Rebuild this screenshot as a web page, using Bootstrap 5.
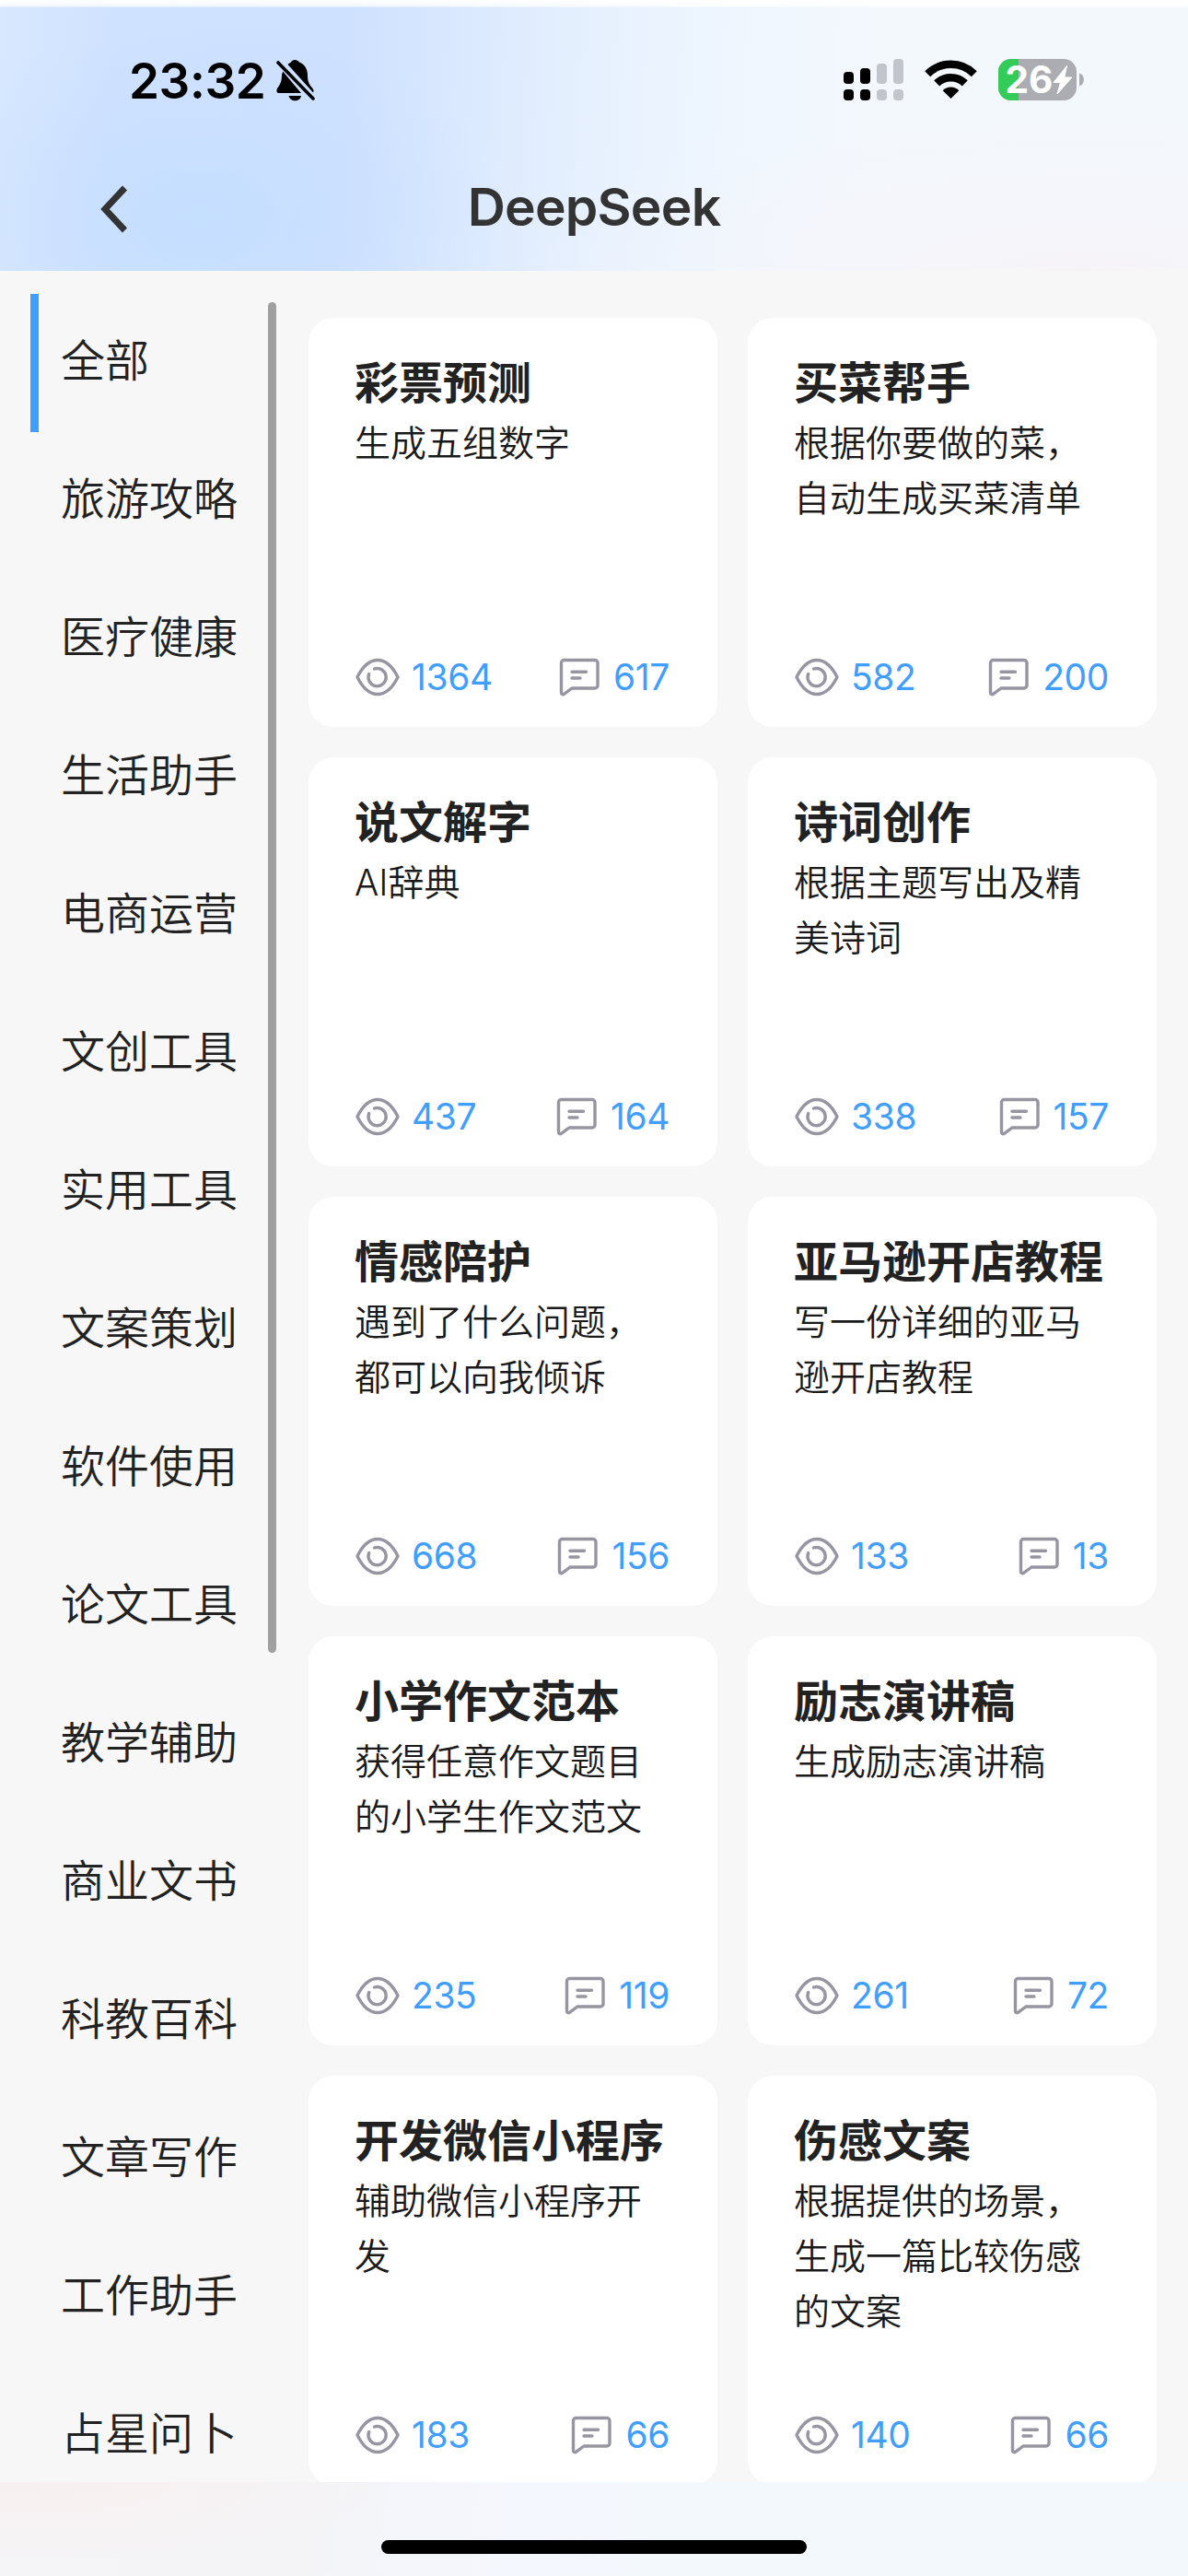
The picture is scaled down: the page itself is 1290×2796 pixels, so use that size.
<!DOCTYPE html>
<html lang="zh-CN">
<head>
<meta charset="utf-8">
<meta name="viewport" content="width=device-width, initial-scale=1">
<title>DeepSeek</title>
<link rel="stylesheet" href="https://cdn.jsdelivr.net/npm/bootstrap@5.3.0/dist/css/bootstrap.min.css">
<style>
  body { font-family: Inter, "Noto Sans CJK SC", sans-serif; background: #f7f7f7; color: #222; height: 2796px; }
  .top-area {
    height: 294px;
    background:
      linear-gradient(#fff 0, rgba(255,255,255,.7) 7px, transparent 8px),
      radial-gradient(ellipse 330px 210px at 215px 235px, rgba(194,222,255,.8) 0%, rgba(197,221,255,.4) 45%, rgba(202,223,255,0) 100%),
      radial-gradient(ellipse 620px 160px at 1180px 294px, rgba(246,243,248,.9) 0%, rgba(246,243,248,0) 100%),
      linear-gradient(94deg, #d8e8ff 0, #cfe2ff 130px, #cee1ff 380px, #dbe9fe 510px, #e7f1fe 660px, #eff6fe 800px, #f3f8fd 950px);
  }
  .status-bar { height: 174px; padding: 0 113px 0 140px; }
  .clock { font-size: 53px; font-weight: 600; line-height: 1; color: #000; letter-spacing: -.4px; width: 160px; padding-top: 2px; }
  .title-bar { height: 120px; padding-left: 98px; padding-right: 98px; }
  .app-title { font-size: 57px; font-weight: 600; line-height: 102px; color: #333; letter-spacing: -.8px; }
  .side-menu { width: 300px; padding: 25px 0 0 33px; }
  .side-menu .nav-link { height: 150px; flex-shrink: 0; padding: 0 0 0 24px; border-left: 9px solid transparent; border-radius: 0; color: #222; font-size: 48px; font-weight: 350; line-height: 146px; white-space: nowrap; }
  .side-menu .nav-link.active { border-left-color: #409eff; }
  .side-thumb { left: 291px; top: 34px; width: 9px; height: 1466px; background: #a0a0a0; }
  .prompt-area { padding: 51px 34px 0 35px; }
  .prompt-area .row { --bs-gutter-x: 33px; --bs-gutter-y: 33px; margin-top: 0; }
  .prompt-area .row > * { margin-top: 0; margin-bottom: 33px; }
  .prompt-card { height: 444px; border: 0; border-radius: 27px; padding: 41px 52px 27px 50px; color: #222; }
  .prompt-card h2 { font-size: 48px; font-weight: 700; line-height: 59px; margin: 0; white-space: nowrap; }
  .prompt-card p { font-size: 39px; font-weight: 350; line-height: 60px; margin: 6px 0 0; color: #1a1a1a; }
  .counts { font-size: 39px; font-weight: 370; line-height: 54px; color: #409eff; letter-spacing: -.4px; padding-left: 1px; }
  .counts > span { gap: 13px; }
  .counts svg { width: 48px; height: 48px; fill: none; stroke: #9895a3; stroke-width: 3.4; stroke-linecap: round; stroke-linejoin: round; }
  .bottom-area { height: 102px; background: radial-gradient(ellipse 380px 90px at 60px 0, #f8f0f0 0, rgba(248,240,240,0) 100%), linear-gradient(95deg, #f5f4f6 0, #f4f4f7 320px, #f4f7fd 560px, #f3f8fd 700px); }
  .home-bar { width: 462px; height: 15px; background: #000; margin-top: 63px; }
  .wifi { margin-left: 23px; }
  .battery { margin-left: 23px; overflow: visible; }
  .title-spacer { width: 52px; }
</style>
<script src="https://cdn.jsdelivr.net/npm/bootstrap@5.3.0/dist/js/bootstrap.bundle.min.js"></script>
</head>
<body class="d-flex flex-column overflow-hidden">
<svg class="d-none">
  <symbol id="eye" viewBox="0 0 48 48"><path d="M2 24C8 12 15 5.500 24 5.500S40 12 46 24C40 36 33 42.500 24 42.500S8 36 2 24Z"/><path d="M20.500 15A9.600 9.600 0 1 1 14.700 20.500"/></symbol>
  <symbol id="msg" viewBox="0 0 48 48"><path d="M7.500 5.500H41A3 3 0 0 1 44 8.500V33A3 3 0 0 1 41 36H16L7.800 42.100C6 43.400 4.500 42.500 4.500 40.500V8.500A3 3 0 0 1 7.500 5.500ZM16 18.200H31.500M16 25H25"/></symbol>
</svg>

<header class="top-area flex-shrink-0">
  <div class="status-bar d-flex align-items-center">
    <span class="clock">23:32</span>
    <svg width="42" height="46" viewBox="0 0 42 46"><path d="M6 17C6.500 16 6.600 15 7.200 13.500L27 37H3C0 37 0 34 1 32C4 28 6 25 6 17ZM12.500 6C14 4.500 15 4 16 3.500C17 0 23 0 25 3.500C31 6 34 11 34 18C34 26 37 29 39.500 32C40.500 33.500 41 35 40 36.500ZM13.500 40H27C26 47 15 47 13.500 40Z"/><path d="M2 4L40 43" stroke="#000" stroke-width="3.600" stroke-linecap="round"/></svg>
    <div class="d-flex align-items-center ms-auto">
      <svg width="65" height="46" viewBox="0 0 65 46"><g><rect y="14" width="11" height="13" rx="4"/><rect x="18" y="10" width="11" height="17" rx="4"/><rect y="33" width="11" height="12" rx="4"/><rect x="18" y="33" width="11" height="12" rx="4"/></g><g fill="#c2c5cb"><rect x="36" y="5" width="11" height="22" rx="4"/><rect x="54" width="11" height="27" rx="4"/><rect x="36" y="33" width="11" height="12" rx="4"/><rect x="54" y="33" width="11" height="12" rx="4"/></g></svg>
      <svg class="wifi" width="57" height="46" viewBox="0 0 57 46"><g fill="none" stroke="#000" stroke-width="8.500"><path d="M3.200 16.200A36 36 0 0 1 53.800 16.200"/><path d="M13.200 26.400A21.800 21.800 0 0 1 43.800 26.400"/></g><path d="M28.500 43L19.700 34.200A12.500 12.500 0 0 1 37.300 34.200Z"/></svg>
      <svg class="battery" width="93" height="46" viewBox="0 0 93 46"><clipPath id="cell"><rect width="85" height="45" rx="14"/></clipPath><g clip-path="url(#cell)"><rect width="85" height="45" fill="#abadb2"/><rect width="22" height="45" fill="#33cc59"/></g><path d="M88 15.500C94.500 17 94.500 28 88 29.500Z" fill="#abadb2"/><text x="7.500" y="37" font-size="41" font-weight="700" fill="#fff" textLength="52" lengthAdjust="spacingAndGlyphs">26</text><path d="M74.500 7.500L60 25.500H67.500L64 38L80 20H71.800Z" fill="#fff" stroke="#fff" stroke-linejoin="round"/></svg>
    </div>
  </div>
  <div class="title-bar d-flex justify-content-between">
    <svg width="52" height="106" viewBox="0 0 52 106"><path d="M37.500 30L16 53L37.500 76" fill="none" stroke="#333" stroke-width="7"/></svg>
    <h1 class="app-title m-0">DeepSeek</h1>
    <span class="title-spacer"></span>
  </div>
</header>

<main class="d-flex flex-grow-1 overflow-hidden position-relative">
  <nav class="side-menu nav flex-column flex-nowrap flex-shrink-0">
    <a class="nav-link active">全部</a>
    <a class="nav-link">旅游攻略</a>
    <a class="nav-link">医疗健康</a>
    <a class="nav-link">生活助手</a>
    <a class="nav-link">电商运营</a>
    <a class="nav-link">文创工具</a>
    <a class="nav-link">实用工具</a>
    <a class="nav-link">文案策划</a>
    <a class="nav-link">软件使用</a>
    <a class="nav-link">论文工具</a>
    <a class="nav-link">教学辅助</a>
    <a class="nav-link">商业文书</a>
    <a class="nav-link">科教百科</a>
    <a class="nav-link">文章写作</a>
    <a class="nav-link">工作助手</a>
    <a class="nav-link">占星问卜</a>
  </nav>
  <div class="side-thumb position-absolute rounded-pill"></div>

  <section class="prompt-area flex-grow-1">
    <div class="row row-cols-2">
      <div class="col"><article class="card prompt-card"><h2>彩票预测</h2><p>生成五组数字</p>
        <div class="counts d-flex justify-content-between mt-auto"><span class="d-flex align-items-center"><svg><use href="#eye"/></svg>1364</span><span class="d-flex align-items-center"><svg><use href="#msg"/></svg>617</span></div></article></div>
      <div class="col"><article class="card prompt-card"><h2>买菜帮手</h2><p>根据你要做的菜，自动生成买菜清单</p>
        <div class="counts d-flex justify-content-between mt-auto"><span class="d-flex align-items-center"><svg><use href="#eye"/></svg>582</span><span class="d-flex align-items-center"><svg><use href="#msg"/></svg>200</span></div></article></div>
      <div class="col"><article class="card prompt-card"><h2>说文解字</h2><p>AI辞典</p>
        <div class="counts d-flex justify-content-between mt-auto"><span class="d-flex align-items-center"><svg><use href="#eye"/></svg>437</span><span class="d-flex align-items-center"><svg><use href="#msg"/></svg>164</span></div></article></div>
      <div class="col"><article class="card prompt-card"><h2>诗词创作</h2><p>根据主题写出及精美诗词</p>
        <div class="counts d-flex justify-content-between mt-auto"><span class="d-flex align-items-center"><svg><use href="#eye"/></svg>338</span><span class="d-flex align-items-center"><svg><use href="#msg"/></svg>157</span></div></article></div>
      <div class="col"><article class="card prompt-card"><h2>情感陪护</h2><p>遇到了什么问题，都可以向我倾诉</p>
        <div class="counts d-flex justify-content-between mt-auto"><span class="d-flex align-items-center"><svg><use href="#eye"/></svg>668</span><span class="d-flex align-items-center"><svg><use href="#msg"/></svg>156</span></div></article></div>
      <div class="col"><article class="card prompt-card"><h2>亚马逊开店教程</h2><p>写一份详细的亚马逊开店教程</p>
        <div class="counts d-flex justify-content-between mt-auto"><span class="d-flex align-items-center"><svg><use href="#eye"/></svg>133</span><span class="d-flex align-items-center"><svg><use href="#msg"/></svg>13</span></div></article></div>
      <div class="col"><article class="card prompt-card"><h2>小学作文范本</h2><p>获得任意作文题目的小学生作文范文</p>
        <div class="counts d-flex justify-content-between mt-auto"><span class="d-flex align-items-center"><svg><use href="#eye"/></svg>235</span><span class="d-flex align-items-center"><svg><use href="#msg"/></svg>119</span></div></article></div>
      <div class="col"><article class="card prompt-card"><h2>励志演讲稿</h2><p>生成励志演讲稿</p>
        <div class="counts d-flex justify-content-between mt-auto"><span class="d-flex align-items-center"><svg><use href="#eye"/></svg>261</span><span class="d-flex align-items-center"><svg><use href="#msg"/></svg>72</span></div></article></div>
      <div class="col"><article class="card prompt-card"><h2>开发微信小程序</h2><p>辅助微信小程序开发</p>
        <div class="counts d-flex justify-content-between mt-auto"><span class="d-flex align-items-center"><svg><use href="#eye"/></svg>183</span><span class="d-flex align-items-center"><svg><use href="#msg"/></svg>66</span></div></article></div>
      <div class="col"><article class="card prompt-card"><h2>伤感文案</h2><p>根据提供的场景，生成一篇比较伤感的文案</p>
        <div class="counts d-flex justify-content-between mt-auto"><span class="d-flex align-items-center"><svg><use href="#eye"/></svg>140</span><span class="d-flex align-items-center"><svg><use href="#msg"/></svg>66</span></div></article></div>
    </div>
  </section>
</main>

<footer class="bottom-area flex-shrink-0 d-flex justify-content-center align-items-start">
  <div class="home-bar rounded-pill"></div>
</footer>
</body>
</html>
